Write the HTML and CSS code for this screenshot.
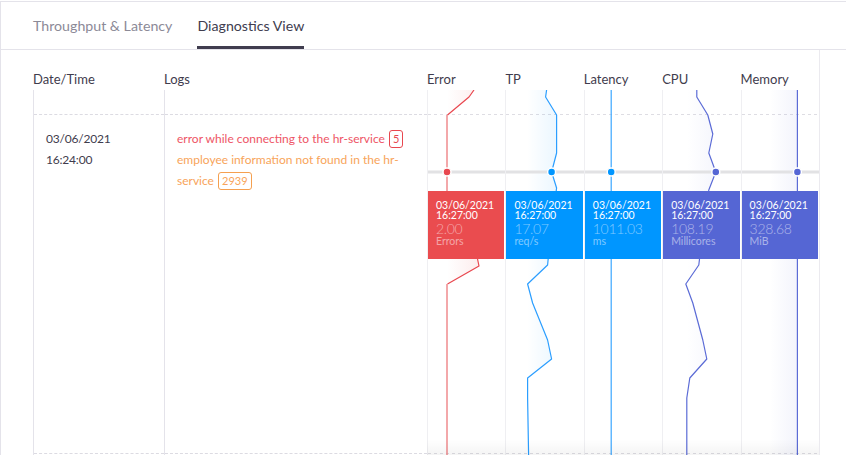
FILE: index.html
```html
<!DOCTYPE html>
<html lang="en">
<head>
<meta charset="utf-8">
<title>Diagnostics View</title>
<link rel="stylesheet" href="styles.css">
</head>
<body>
<div class="panel">
  <nav class="tabs">
    <div class="tab">Throughput &amp; Latency</div>
    <div class="tab active">Diagnostics View</div>
  </nav>
  <div class="view">
    <div class="table">
      <div class="thead">
        <div class="th c-date">Date/Time</div>
        <div class="th c-logs">Logs</div>
      </div>
      <div class="tbody">
        <div class="col c-date">
          <div class="cell-spacer"></div>
          <div class="cell">
            <div class="date">03/06/2021</div>
            <div class="date">16:24:00</div>
          </div>
        </div>
        <div class="col c-logs">
          <div class="cell-spacer"></div>
          <div class="cell logs">
            <span class="log log-error">error while connecting to the hr-service <span class="badge">5</span></span>
            <span class="log log-warn">employee information not found in the hr-service <span class="badge">2939</span></span>
          </div>
        </div>
      </div>
    </div>

    <div class="charts">
      <div class="chart">
        <div class="chart-label">Error</div>
        <div class="plot">
          <svg class="plot-svg" width="100%" height="365">
            <defs>
              <linearGradient id="gErr" gradientUnits="userSpaceOnUse" x1="19" y1="0" x2="47" y2="0">
                <stop offset="0" stop-color="#ea4c4f" stop-opacity="0"/>
                <stop offset="1" stop-color="#ea4c4f" stop-opacity="0.09"/>
              </linearGradient>
            </defs>
            <line class="dash" x1="0" y1="24.5" x2="100" y2="24.5"/>
            <line class="dash" x1="0" y1="363.5" x2="100" y2="363.5"/>
            <polygon fill="url(#gErr)" points="0,0 46,0 41,7 19,25 19,82 19,130 47,157 51,176 19,194 19,365 0,365"/>
            <line class="cursor" x1="0" y1="82" x2="100" y2="82"/>
            <polyline class="ln" stroke="#e9474f" points="46,0 41,7 19.5,25"/>
            <polyline class="ln ln-soft" stroke="#ef8b8e" points="19,25 19,130"/>
            <polyline class="ln" stroke="#e9474f" points="19,130 47,157 51,176 19.5,194"/>
            <polyline class="ln ln-soft" stroke="#ef8b8e" points="19,194 19,365"/>
            <circle class="dot" cx="19" cy="82" r="4" fill="#e8474f"/>
          </svg>
          <div class="tip tip-red">
            <div class="tip-date">03/06/2021</div>
            <div class="tip-date">16:27:00</div>
            <div class="tip-value">2.00</div>
            <div class="tip-unit">Errors</div>
          </div>
        </div>
      </div>

      <div class="chart">
        <div class="chart-label">TP</div>
        <div class="plot">
          <svg class="plot-svg" width="100%" height="365">
            <defs>
              <linearGradient id="gTp" gradientUnits="userSpaceOnUse" x1="21" y1="0" x2="51" y2="0">
                <stop offset="0" stop-color="#0096ff" stop-opacity="0"/>
                <stop offset="1" stop-color="#0096ff" stop-opacity="0.08"/>
              </linearGradient>
            </defs>
            <line class="dash" x1="0" y1="24.5" x2="100" y2="24.5"/>
            <line class="dash" x1="0" y1="363.5" x2="100" y2="363.5"/>
            <polygon fill="url(#gTp)" points="0,0 40.6,0 39.6,7 50.6,25 50.6,63 45.6,82 50.6,98 45,140 41.6,175 21.6,194 26.6,213 41.6,250 45.6,269 21.6,288 21.6,308 22.6,365 0,365"/>
            <line class="cursor" x1="0" y1="82" x2="100" y2="82"/>
            <polyline class="ln" stroke="#2b9eff" points="40.6,0 39.6,7 50.6,25 50.6,63 45.6,82 50.6,98 45,140 41.6,175 21.6,194 26.6,213 41.6,250 45.6,269 21.6,288 21.6,308 22.6,365"/>
            <circle class="dot" cx="45.6" cy="82" r="4" fill="#0096ff"/>
          </svg>
          <div class="tip tip-blue">
            <div class="tip-date">03/06/2021</div>
            <div class="tip-date">16:27:00</div>
            <div class="tip-value">17.07</div>
            <div class="tip-unit">req/s</div>
          </div>
        </div>
      </div>

      <div class="chart">
        <div class="chart-label">Latency</div>
        <div class="plot">
          <svg class="plot-svg" width="100%" height="365">
            <line class="dash" x1="0" y1="24.5" x2="100" y2="24.5"/>
            <line class="dash" x1="0" y1="363.5" x2="100" y2="363.5"/>
            <line class="cursor" x1="0" y1="82" x2="100" y2="82"/>
            <line class="ln" stroke="#3aa6ff" x1="26.2" y1="0" x2="26.2" y2="365"/>
            <circle class="dot" cx="26.2" cy="82" r="4" fill="#0096ff"/>
          </svg>
          <div class="tip tip-blue">
            <div class="tip-date">03/06/2021</div>
            <div class="tip-date">16:27:00</div>
            <div class="tip-value">1011.03</div>
            <div class="tip-unit">ms</div>
          </div>
        </div>
      </div>

      <div class="chart">
        <div class="chart-label">CPU</div>
        <div class="plot">
          <svg class="plot-svg" width="100%" height="365">
            <defs>
              <linearGradient id="gCpu" gradientUnits="userSpaceOnUse" x1="24" y1="0" x2="53" y2="0">
                <stop offset="0" stop-color="#5566d4" stop-opacity="0"/>
                <stop offset="1" stop-color="#5566d4" stop-opacity="0.06"/>
              </linearGradient>
            </defs>
            <line class="dash" x1="0" y1="24.5" x2="100" y2="24.5"/>
            <line class="dash" x1="0" y1="363.5" x2="100" y2="363.5"/>
            <polygon fill="url(#gCpu)" points="0,0 33.8,0 33.8,7 44.8,25 49.8,44 45.8,63 52.8,82 45.8,100 40,140 35.8,175 22.8,194 29.8,213 39.8,250 43.8,269 26.8,288 23.8,308 23.8,365 0,365"/>
            <line class="cursor" x1="0" y1="82" x2="100" y2="82"/>
            <polyline class="ln" stroke="#5b6bd6" points="33.8,0 33.8,7 44.8,25 49.8,44 45.8,63 52.8,82 45.8,100 40,140 35.8,175 22.8,194 29.8,213 39.8,250 43.8,269 26.8,288 23.8,308 23.8,365"/>
            <circle class="dot" cx="52.8" cy="82" r="4" fill="#5566d4"/>
          </svg>
          <div class="tip tip-indigo">
            <div class="tip-date">03/06/2021</div>
            <div class="tip-date">16:27:00</div>
            <div class="tip-value">108.19</div>
            <div class="tip-unit">Millicores</div>
          </div>
        </div>
      </div>

      <div class="chart">
        <div class="chart-label">Memory</div>
        <div class="plot">
          <svg class="plot-svg" width="100%" height="365">
            <defs>
              <linearGradient id="gMem" gradientUnits="userSpaceOnUse" x1="28" y1="0" x2="55" y2="0">
                <stop offset="0" stop-color="#5566d4" stop-opacity="0"/>
                <stop offset="1" stop-color="#5566d4" stop-opacity="0.07"/>
              </linearGradient>
            </defs>
            <line class="dash" x1="0" y1="24.5" x2="100" y2="24.5"/>
            <line class="dash" x1="0" y1="363.5" x2="100" y2="363.5"/>
            <rect x="0" y="0" width="55.4" height="365" fill="url(#gMem)"/>
            <line class="cursor" x1="0" y1="82" x2="100" y2="82"/>
            <line class="ln" stroke="#5b6bd6" x1="55.4" y1="0" x2="55.4" y2="365"/>
            <circle class="dot" cx="55.4" cy="82" r="4" fill="#5566d4"/>
          </svg>
          <div class="tip tip-indigo">
            <div class="tip-date">03/06/2021</div>
            <div class="tip-date">16:27:00</div>
            <div class="tip-value">328.68</div>
            <div class="tip-unit">MiB</div>
          </div>
        </div>
      </div>
    </div>
  </div>
</div>
</body>
</html>
```

FILE: styles.css
```css
* { box-sizing: border-box; }

html, body {
  margin: 0;
  padding: 0;
  background: #ffffff;
}

body {
  width: 846px;
  height: 455px;
  overflow: hidden;
  font-family: "Lato", "Noto Sans", sans-serif;
  color: #3f3c4d;
}

.panel {
  margin-top: 1px;
  border-top: 1px solid #e4e3ea;
  border-left: 1px solid #e4e3ea;
  height: 454px;
  display: flex;
  flex-direction: column;
}

/* Tabs */
.tabs {
  display: flex;
  gap: 25px;
  height: 48px;
  padding-left: 32px;
  border-bottom: 1px solid #e4e3ea;
  flex: none;
}

.tab {
  display: flex;
  align-items: center;
  height: 100%;
  font-size: 14.2px;
  color: #8c8a97;
}

.tab.active {
  color: #403d4f;
  box-shadow: inset 0 -3px 0 #403d4f;
}

/* Main view */
.view {
  display: flex;
  padding-left: 32px;
  flex: 1;
}

.table {
  width: 394px;
  flex: none;
  display: flex;
  flex-direction: column;
}

.thead {
  display: flex;
  height: 40px;
  padding-top: 21px;
}

.th {
  font-size: 13px;
  line-height: 16px;
  color: #3f3c4d;
}

.c-date { width: 131px; flex: none; }
.c-logs { flex: 1; }

.tbody {
  display: flex;
  height: 365px;
}

.col {
  border-left: 1px solid #e4e3ea;
  height: 100%;
  display: flex;
  flex-direction: column;
}

.cell-spacer { height: 24px; flex: none; }

.cell {
  height: 340px;
  border-top: 1px dashed #dcdbe2;
  border-bottom: 1px dashed #dcdbe2;
  padding: 13px 12px 0 12px;
}

.date {
  font-size: 12px;
  line-height: 21px;
  letter-spacing: -0.2px;
  color: #3f3c4d;
}

.logs {
  padding-right: 14px;
  font-size: 12px;
  line-height: 21px;
}

.log { display: block; }

.log-error { color: #ee5566; }
.log-warn { color: #f8a45a; }

.badge {
  display: inline-block;
  font-size: 11px;
  line-height: 16px;
  padding: 0 3px;
  border: 1px solid currentColor;
  border-radius: 3px;
  margin-left: 1px;
}

.log-error .badge { border-color: #e8474f; color: #e8474f; }
.log-warn .badge { border-color: #f5a050; }

/* Charts */
.charts {
  width: 393px;
  flex: none;
  display: grid;
  grid-template-columns: repeat(5, 1fr);
  border-right: 1px solid #ebeaef;
  position: relative;
}

.charts::after {
  content: "";
  position: absolute;
  left: 0;
  right: 0;
  bottom: 0;
  height: 16px;
  background: linear-gradient(rgba(0,0,0,0), rgba(0,0,0,0.045));
  pointer-events: none;
}

.chart {
  display: flex;
  flex-direction: column;
  min-width: 0;
}

.chart-label {
  height: 40px;
  padding-top: 21px;
  font-size: 13px;
  line-height: 16px;
  color: #3f3c4d;
  white-space: nowrap;
}

.plot {
  position: relative;
  height: 365px;
  border-left: 1px solid #efeff2;
}

.plot-svg { display: block; overflow: hidden; }

.dash {
  stroke: #dedde3;
  stroke-width: 1;
  stroke-dasharray: 3 3;
}

.cursor {
  stroke: #e2e2e4;
  stroke-width: 3;
}

.ln {
  fill: none;
  stroke-width: 1.2;
  stroke-linejoin: round;
}

.ln-soft { stroke-width: 1.5; }

.dot {
  stroke: #ffffff;
  stroke-width: 1.5;
}

.tip {
  position: absolute;
  top: 101px;
  left: 0;
  right: 1px;
  height: 68px;
  padding: 9px 0 0 8px;
  color: #ffffff;
}

.tip-red { background: #ea4c4f; }
.tip-blue { background: #0096ff; }
.tip-indigo { background: #5566d4; }

.tip-date {
  font-size: 10.5px;
  line-height: 10px;
}

.tip-value {
  margin-top: 1px;
  font-size: 14px;
  font-weight: 300;
  line-height: 15px;
  letter-spacing: -0.3px;
  color: rgba(255,255,255,0.5);
}

.tip-unit {
  font-size: 10.5px;
  line-height: 11px;
  color: rgba(255,255,255,0.5);
}
```
